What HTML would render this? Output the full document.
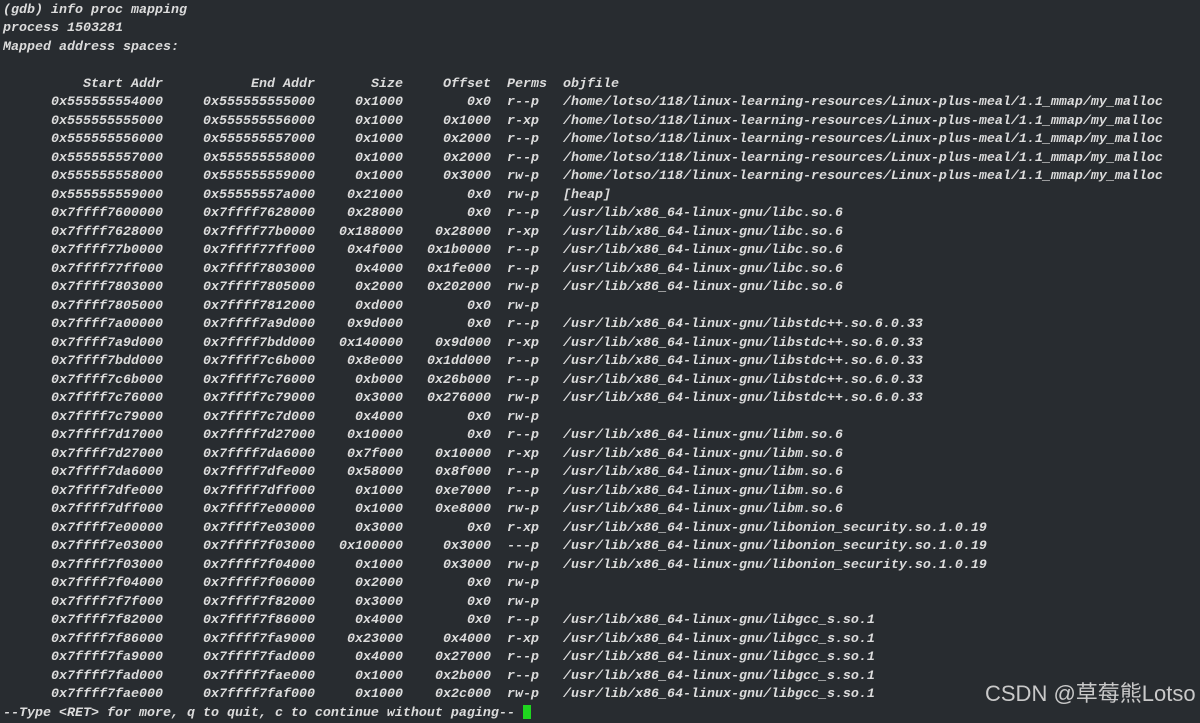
<!DOCTYPE html>
<html><head><meta charset="utf-8"><style>
html,body{margin:0;padding:0;}
body{width:1200px;height:710px;overflow:hidden;background:#282c30;color:#dcdcdc;font-family:"Liberation Mono",monospace;font-style:italic;font-weight:bold;font-size:13.33px;position:relative;}
.t{position:absolute;left:3px;top:1.5px;}
.l{height:18.5px;line-height:18.5px;white-space:pre;}
.l span{display:inline-block;white-space:pre;}
.a{width:160px;text-align:right}
.b{width:152px;text-align:right}
.c{width:88px;text-align:right}
.d{width:88px;text-align:right}
.e{width:56px;margin-left:16px}
.cur{display:inline-block;width:8px;height:14px;background:#1fd61f;vertical-align:middle}
.wm{position:absolute;left:985px;top:676px;font-family:"Liberation Sans","Noto Sans CJK SC",sans-serif;font-style:normal;font-weight:normal;font-size:22px;color:#c9c9c9;}
</style></head><body>
<div class="t">
<div class="l">(gdb) info proc mapping</div>
<div class="l">process 1503281</div>
<div class="l">Mapped address spaces:</div>
<div class="l"> </div>
<div class="l"><span class="a">Start Addr</span><span class="b">End Addr</span><span class="c">Size</span><span class="d">Offset</span><span class="e">Perms</span>objfile</div>
<div class="l"><span class="a">0x555555554000</span><span class="b">0x555555555000</span><span class="c">0x1000</span><span class="d">0x0</span><span class="e">r--p</span>/home/lotso/118/linux-learning-resources/Linux-plus-meal/1.1_mmap/my_malloc</div>
<div class="l"><span class="a">0x555555555000</span><span class="b">0x555555556000</span><span class="c">0x1000</span><span class="d">0x1000</span><span class="e">r-xp</span>/home/lotso/118/linux-learning-resources/Linux-plus-meal/1.1_mmap/my_malloc</div>
<div class="l"><span class="a">0x555555556000</span><span class="b">0x555555557000</span><span class="c">0x1000</span><span class="d">0x2000</span><span class="e">r--p</span>/home/lotso/118/linux-learning-resources/Linux-plus-meal/1.1_mmap/my_malloc</div>
<div class="l"><span class="a">0x555555557000</span><span class="b">0x555555558000</span><span class="c">0x1000</span><span class="d">0x2000</span><span class="e">r--p</span>/home/lotso/118/linux-learning-resources/Linux-plus-meal/1.1_mmap/my_malloc</div>
<div class="l"><span class="a">0x555555558000</span><span class="b">0x555555559000</span><span class="c">0x1000</span><span class="d">0x3000</span><span class="e">rw-p</span>/home/lotso/118/linux-learning-resources/Linux-plus-meal/1.1_mmap/my_malloc</div>
<div class="l"><span class="a">0x555555559000</span><span class="b">0x55555557a000</span><span class="c">0x21000</span><span class="d">0x0</span><span class="e">rw-p</span>[heap]</div>
<div class="l"><span class="a">0x7ffff7600000</span><span class="b">0x7ffff7628000</span><span class="c">0x28000</span><span class="d">0x0</span><span class="e">r--p</span>/usr/lib/x86_64-linux-gnu/libc.so.6</div>
<div class="l"><span class="a">0x7ffff7628000</span><span class="b">0x7ffff77b0000</span><span class="c">0x188000</span><span class="d">0x28000</span><span class="e">r-xp</span>/usr/lib/x86_64-linux-gnu/libc.so.6</div>
<div class="l"><span class="a">0x7ffff77b0000</span><span class="b">0x7ffff77ff000</span><span class="c">0x4f000</span><span class="d">0x1b0000</span><span class="e">r--p</span>/usr/lib/x86_64-linux-gnu/libc.so.6</div>
<div class="l"><span class="a">0x7ffff77ff000</span><span class="b">0x7ffff7803000</span><span class="c">0x4000</span><span class="d">0x1fe000</span><span class="e">r--p</span>/usr/lib/x86_64-linux-gnu/libc.so.6</div>
<div class="l"><span class="a">0x7ffff7803000</span><span class="b">0x7ffff7805000</span><span class="c">0x2000</span><span class="d">0x202000</span><span class="e">rw-p</span>/usr/lib/x86_64-linux-gnu/libc.so.6</div>
<div class="l"><span class="a">0x7ffff7805000</span><span class="b">0x7ffff7812000</span><span class="c">0xd000</span><span class="d">0x0</span><span class="e">rw-p</span></div>
<div class="l"><span class="a">0x7ffff7a00000</span><span class="b">0x7ffff7a9d000</span><span class="c">0x9d000</span><span class="d">0x0</span><span class="e">r--p</span>/usr/lib/x86_64-linux-gnu/libstdc++.so.6.0.33</div>
<div class="l"><span class="a">0x7ffff7a9d000</span><span class="b">0x7ffff7bdd000</span><span class="c">0x140000</span><span class="d">0x9d000</span><span class="e">r-xp</span>/usr/lib/x86_64-linux-gnu/libstdc++.so.6.0.33</div>
<div class="l"><span class="a">0x7ffff7bdd000</span><span class="b">0x7ffff7c6b000</span><span class="c">0x8e000</span><span class="d">0x1dd000</span><span class="e">r--p</span>/usr/lib/x86_64-linux-gnu/libstdc++.so.6.0.33</div>
<div class="l"><span class="a">0x7ffff7c6b000</span><span class="b">0x7ffff7c76000</span><span class="c">0xb000</span><span class="d">0x26b000</span><span class="e">r--p</span>/usr/lib/x86_64-linux-gnu/libstdc++.so.6.0.33</div>
<div class="l"><span class="a">0x7ffff7c76000</span><span class="b">0x7ffff7c79000</span><span class="c">0x3000</span><span class="d">0x276000</span><span class="e">rw-p</span>/usr/lib/x86_64-linux-gnu/libstdc++.so.6.0.33</div>
<div class="l"><span class="a">0x7ffff7c79000</span><span class="b">0x7ffff7c7d000</span><span class="c">0x4000</span><span class="d">0x0</span><span class="e">rw-p</span></div>
<div class="l"><span class="a">0x7ffff7d17000</span><span class="b">0x7ffff7d27000</span><span class="c">0x10000</span><span class="d">0x0</span><span class="e">r--p</span>/usr/lib/x86_64-linux-gnu/libm.so.6</div>
<div class="l"><span class="a">0x7ffff7d27000</span><span class="b">0x7ffff7da6000</span><span class="c">0x7f000</span><span class="d">0x10000</span><span class="e">r-xp</span>/usr/lib/x86_64-linux-gnu/libm.so.6</div>
<div class="l"><span class="a">0x7ffff7da6000</span><span class="b">0x7ffff7dfe000</span><span class="c">0x58000</span><span class="d">0x8f000</span><span class="e">r--p</span>/usr/lib/x86_64-linux-gnu/libm.so.6</div>
<div class="l"><span class="a">0x7ffff7dfe000</span><span class="b">0x7ffff7dff000</span><span class="c">0x1000</span><span class="d">0xe7000</span><span class="e">r--p</span>/usr/lib/x86_64-linux-gnu/libm.so.6</div>
<div class="l"><span class="a">0x7ffff7dff000</span><span class="b">0x7ffff7e00000</span><span class="c">0x1000</span><span class="d">0xe8000</span><span class="e">rw-p</span>/usr/lib/x86_64-linux-gnu/libm.so.6</div>
<div class="l"><span class="a">0x7ffff7e00000</span><span class="b">0x7ffff7e03000</span><span class="c">0x3000</span><span class="d">0x0</span><span class="e">r-xp</span>/usr/lib/x86_64-linux-gnu/libonion_security.so.1.0.19</div>
<div class="l"><span class="a">0x7ffff7e03000</span><span class="b">0x7ffff7f03000</span><span class="c">0x100000</span><span class="d">0x3000</span><span class="e">---p</span>/usr/lib/x86_64-linux-gnu/libonion_security.so.1.0.19</div>
<div class="l"><span class="a">0x7ffff7f03000</span><span class="b">0x7ffff7f04000</span><span class="c">0x1000</span><span class="d">0x3000</span><span class="e">rw-p</span>/usr/lib/x86_64-linux-gnu/libonion_security.so.1.0.19</div>
<div class="l"><span class="a">0x7ffff7f04000</span><span class="b">0x7ffff7f06000</span><span class="c">0x2000</span><span class="d">0x0</span><span class="e">rw-p</span></div>
<div class="l"><span class="a">0x7ffff7f7f000</span><span class="b">0x7ffff7f82000</span><span class="c">0x3000</span><span class="d">0x0</span><span class="e">rw-p</span></div>
<div class="l"><span class="a">0x7ffff7f82000</span><span class="b">0x7ffff7f86000</span><span class="c">0x4000</span><span class="d">0x0</span><span class="e">r--p</span>/usr/lib/x86_64-linux-gnu/libgcc_s.so.1</div>
<div class="l"><span class="a">0x7ffff7f86000</span><span class="b">0x7ffff7fa9000</span><span class="c">0x23000</span><span class="d">0x4000</span><span class="e">r-xp</span>/usr/lib/x86_64-linux-gnu/libgcc_s.so.1</div>
<div class="l"><span class="a">0x7ffff7fa9000</span><span class="b">0x7ffff7fad000</span><span class="c">0x4000</span><span class="d">0x27000</span><span class="e">r--p</span>/usr/lib/x86_64-linux-gnu/libgcc_s.so.1</div>
<div class="l"><span class="a">0x7ffff7fad000</span><span class="b">0x7ffff7fae000</span><span class="c">0x1000</span><span class="d">0x2b000</span><span class="e">r--p</span>/usr/lib/x86_64-linux-gnu/libgcc_s.so.1</div>
<div class="l"><span class="a">0x7ffff7fae000</span><span class="b">0x7ffff7faf000</span><span class="c">0x1000</span><span class="d">0x2c000</span><span class="e">rw-p</span>/usr/lib/x86_64-linux-gnu/libgcc_s.so.1</div>
<div class="l">--Type &lt;RET&gt; for more, q to quit, c to continue without paging-- <span class="cur"></span></div>
</div>
<div class="wm">CSDN @草莓熊Lotso</div>
</body></html>
